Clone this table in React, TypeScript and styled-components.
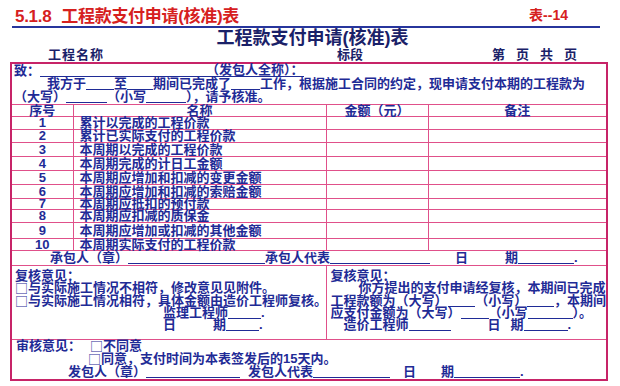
import React from 'react';
import styled, { createGlobalStyle } from 'styled-components';

const color = {
  red: '#d6201e',
  navy: '#1a2168',
  ink: '#1f2b96',
  rule: '#27359c',
  line: '#e0508a',
  frame: '#c72468',
};

const font = `"Liberation Sans", "Noto Sans CJK SC", sans-serif`;
const cjk = `"Noto Sans CJK SC", sans-serif`;

const items = [
  { name: '累计以完成的工程价款', h: 13 },
  { name: '累计已实际支付的工程价款', h: 13 },
  { name: '本周期以完成的工程价款', h: 14 },
  { name: '本周期完成的计日工金额', h: 14 },
  { name: '本周期应增加和扣减的变更金额', h: 14 },
  { name: '本周期应增加和扣减的索赔金额', h: 14 },
  { name: '本周期应抵扣的预付款', h: 11 },
  { name: '本周期应扣减的质保金', h: 13 },
  { name: '本周期应增加或扣减的其他金额', h: 16 },
  { name: '本周期实际支付的工程价款', h: 12 },
];

const GlobalStyle = createGlobalStyle`
  html, body {
    margin: 0;
    padding: 0;
    background: #fff;
  }
  body {
    font-family: ${font};
  }
`;

const Page = styled.div`
  width: 620px;
  height: 386px;
  overflow: hidden;
  background: #fff;
`;

const TopBar = styled.div`
  display: flex;
  justify-content: space-between;
  align-items: center;
  height: 26px;
  padding: 2px 52px 0 15px;
  box-sizing: border-box;
  color: ${color.red};
  font-weight: 700;
`;

const SectionName = styled.span`
  font-size: 17px;
  letter-spacing: -0.3px;

  b {
    margin-right: 10px;
  }
`;

const FormNo = styled.span`
  font-size: 14px;
`;

const BlueRule = styled.div`
  height: 2px;
  margin: 0 20px 0 12px;
  background: ${color.rule};
`;

const Title = styled.h1`
  margin: 0;
  padding: 2px 0 0 5px;
  font-size: 18px;
  line-height: 16px;
  font-weight: 700;
  text-align: center;
  color: ${color.navy};
`;

const MetaRow = styled.div`
  display: grid;
  grid-template-columns: 289px 155px 1fr;
  margin-top: 2px;
  padding-left: 48px;
  font-size: 13px;
  line-height: 14px;
  font-weight: 700;
  color: ${color.navy};
`;

const MetaItem = styled.span<{ $spread?: number }>`
  display: flex;
  gap: ${({ $spread }) => $spread ?? 0}px;
  letter-spacing: ${({ $spread }) => ($spread ? 0 : 1)}px;
`;

const Sheet = styled.table`
  width: 598px;
  margin: 0 0 0 10px;
  border-collapse: collapse;
  table-layout: fixed;
  border: 2px solid ${color.frame};
  color: ${color.ink};
  font-size: 13px;
  font-weight: 600;
`;

// $h is the row pitch; the 1px rule between rows is part of it
const Cell = styled.td<{ $h: number; $align?: 'left' | 'center' }>`
  height: ${({ $h }) => $h - 1}px;
  padding: 0;
  border: 1px solid ${color.line};
  text-align: ${({ $align }) => $align ?? 'left'};
  vertical-align: top;
  line-height: ${({ $h }) => $h - 1}px;
  white-space: nowrap;
  overflow: visible;
`;

const Block = styled.div<{ $top?: number }>`
  padding-top: ${({ $top }) => $top ?? 0}px;
`;

const Line = styled.div<{ $indent?: number; $lh?: number }>`
  display: flex;
  align-items: flex-end;
  height: ${({ $lh }) => $lh ?? 13}px;
  line-height: ${({ $lh }) => $lh ?? 13}px;
  padding-left: ${({ $indent }) => $indent ?? 2}px;
  white-space: nowrap;
`;

const Blank = styled.span<{ $w: number }>`
  display: inline-block;
  width: ${({ $w }) => $w}px;
  height: 11px;
  border-bottom: 1px solid ${color.ink};
`;

const Under = styled.span`
  border-bottom: 1px solid ${color.ink};
  line-height: 12px;
`;

const Space = styled.span<{ $w: number }>`
  display: inline-block;
  width: ${({ $w }) => $w}px;
`;

const Box = styled.span`
  font-family: ${cjk};
  font-weight: 400;
`;

const Name = styled.span`
  padding-left: 6px;
`;

const Foot = styled.div`
  display: flex;
  justify-content: flex-start;
  padding: 5px 0 0 500px;
`;

const Tab = styled.div`
  width: 77px;
  height: 8px;
  border-radius: 6px 6px 0 0;
  background: #f3b763;
`;

const App: React.FC = () => (
  <Page>
    <GlobalStyle />
    <TopBar>
      <SectionName>
        <b>5.1.8</b>工程款支付申请(核准)表
      </SectionName>
      <FormNo>表--14</FormNo>
    </TopBar>
    <BlueRule />
    <Title>工程款支付申请(核准)表</Title>
    <MetaRow>
      <MetaItem>工程名称</MetaItem>
      <MetaItem $spread={11}>标段</MetaItem>
      <MetaItem $spread={11}>
        <span>第</span>
        <span>页</span>
        <span>共</span>
        <span>页</span>
      </MetaItem>
    </MetaRow>
    <Sheet>
      <colgroup>
        <col style={{ width: 62 }} />
        <col style={{ width: 253 }} />
        <col style={{ width: 102 }} />
        <col />
      </colgroup>
      <tbody>
        <tr>
          <Cell $h={41} colSpan={4}>
            <Block>
              <Line>
                致：<Blank $w={166} />
                <Under>（发包人全称）：</Under>
              </Line>
              <Line $indent={35}>
                我方于<Blank $w={28} />至<Blank $w={26} />期间已完成了<Blank $w={29} />
                工作，根据施工合同的约定，现申请支付本期的工程款为
              </Line>
              <Line>
                （大写）<Blank $w={41} />（小写<Blank $w={40} />），请予核准。
              </Line>
            </Block>
          </Cell>
        </tr>
        <tr>
          <Cell $h={12} $align="center">序号</Cell>
          <Cell $h={12} $align="center">名称</Cell>
          <Cell $h={12} $align="center">金额（元）</Cell>
          <Cell $h={12} $align="center">备注</Cell>
        </tr>
        {items.map((item, i) => (
          <tr key={item.name}>
            <Cell $h={item.h} $align="center">{i + 1}</Cell>
            <Cell $h={item.h}>
              <Name>{item.name}</Name>
            </Cell>
            <Cell $h={item.h} />
            <Cell $h={item.h} />
          </tr>
        ))}
        <tr>
          <Cell $h={15} colSpan={4}>
            <Line $indent={38} $lh={13}>
              承包人（章）<Blank $w={137} />承包人代表<Blank $w={100} />
              <Space $w={25} />日<Space $w={37} />期<Blank $w={56} />.
            </Line>
          </Cell>
        </tr>
        <tr>
          <Cell $h={74} colSpan={2}>
            <Block $top={4}>
              <Line $indent={3} $lh={12}>复核意见：</Line>
              <Line $indent={3} $lh={12}>
                <Box>□</Box>与实际施工情况不相符，修改意见见附件。
              </Line>
              <Line $indent={3} $lh={13}>
                <Box>□</Box>与实际施工情况相符，具体金额由造价工程师复核。
              </Line>
              <Line $indent={151} $lh={12}>
                监理工程师<Blank $w={33} />.
              </Line>
              <Line $indent={151} $lh={12}>
                日<Space $w={37} />期<Blank $w={33} />.
              </Line>
            </Block>
          </Cell>
          <Cell $h={74} colSpan={2}>
            <Block $top={4}>
              <Line $indent={4} $lh={12}>复核意见：</Line>
              <Line $indent={32} $lh={12}>你方提出的支付申请经复核，本期间已完成</Line>
              <Line $indent={4} $lh={13}>
                工程款额为（大写）<Blank $w={31} />（小写）<Blank $w={30} />，本期间
              </Line>
              <Line $indent={4} $lh={12}>
                应支付金额为（大写）<Blank $w={28} />（小写<Blank $w={45} />）。
              </Line>
              <Line $indent={17} $lh={12}>
                造价工程师<Blank $w={42} />
                <Space $w={37} />日<Space $w={10} />期<Blank $w={44} />.
              </Line>
            </Block>
          </Cell>
        </tr>
        <tr>
          <Cell $h={40} colSpan={4}>
            <Block>
              <Line $indent={4} $lh={12}>
                审核意见：<Space $w={9} />
                <Box>□</Box>不同意
              </Line>
              <Line $indent={76} $lh={14}>
                <Box>□</Box>同意，支付时间为本表签发后的15天内。
              </Line>
              <Line $indent={56} $lh={12}>
                发包人（章）<Blank $w={94} />
                <Space $w={8} />发包人代表<Blank $w={77} />
                <Space $w={13} />日<Space $w={25} />期<Blank $w={66} />.
              </Line>
            </Block>
          </Cell>
        </tr>
      </tbody>
    </Sheet>
    <Foot>
      <Tab />
    </Foot>
  </Page>
);

export default App;
